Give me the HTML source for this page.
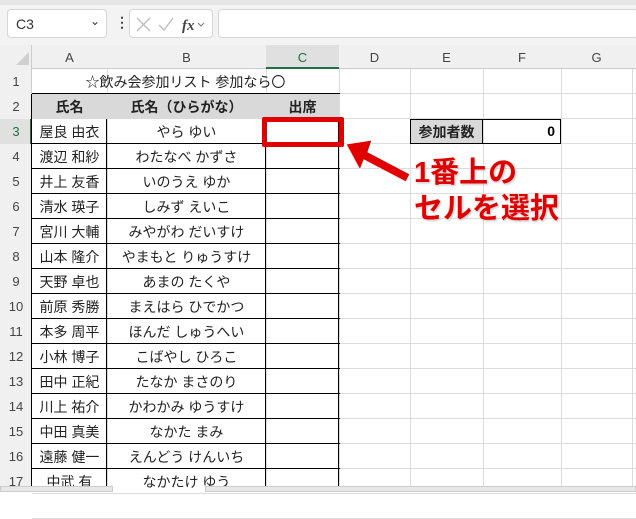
<!DOCTYPE html>
<html><head><meta charset="utf-8"><style>
body{margin:0;width:636px;height:492px;overflow:hidden;background:#fff;font-family:"Liberation Sans","Noto Sans CJK JP",sans-serif;position:relative}
.a{position:absolute;box-sizing:border-box}
.c{position:absolute;box-sizing:border-box;display:flex;align-items:center;justify-content:center;font-size:14px;color:#222}
</style></head><body>
<div class="a" style="left:0;top:0;width:636px;height:5px;background:#e6e6e6"></div>
<div class="a" style="left:0;top:5px;width:636px;height:40px;background:#f3f3f3"></div>
<div class="a" style="left:7px;top:9px;width:100px;height:29px;background:#fff;border:1px solid #d6d6d6;border-radius:4px;font-size:14px;padding:6px 0 0 8px;color:#333">C3<span style="position:absolute;right:6px;top:4px;font-size:12px">&#8964;</span></div>
<div class="a" style="left:115px;top:14px;font-size:14px;color:#444;font-weight:bold">⋮</div>
<div class="a" style="left:129px;top:9px;width:84px;height:29px;background:#fff;border:1px solid #d6d6d6;border-radius:4px">
<svg width="84" height="29" style="position:absolute;left:0;top:0"><path d="M7 8l13 13M20 8L7 21" stroke="#bbb" stroke-width="1.3" fill="none"/><path d="M29 15l5 5 9-12" stroke="#bbb" stroke-width="1.3" fill="none"/><text x="52" y="20" font-family="Liberation Serif" font-style="italic" font-weight="bold" font-size="15" fill="#444">fx</text><path d="M68 13l3 3 3-3" stroke="#777" fill="none"/></svg></div>
<div class="a" style="left:218px;top:9px;width:420px;height:29px;background:#fff;border:1px solid #d6d6d6;border-radius:4px"></div>
<!-- headers -->
<div class="a" style="left:0;top:45px;width:636px;height:24px;background:#f0f0f0;border-bottom:1px solid #ccc"></div>
<div class="a" style="left:0;top:45px;width:32px;height:447px;background:#f0f0f0;border-right:1px solid #ccc"></div>
<svg class="a" style="left:14px;top:50px" width="16" height="16"><polygon points="15,2 15,15 2,15" fill="#d0d0d0"/></svg>
<div class="a" style="left:266px;top:45px;width:73px;height:24px;background:#e0e0e0;border-bottom:2px solid #1e7145"></div>
<div class="a" style="left:0;top:119px;width:32px;height:25px;background:#e0e0e0;border-right:2px solid #1e7145"></div>
<div id="g"></div>
<!-- table content -->
<div class="c" style="left:32px;top:69px;width:307px;height:25px">☆飲み会参加リスト 参加なら〇</div>
<div class="a" style="left:32px;top:94px;width:307px;height:25px;background:#d9d9d9"></div>
<div class="c" style="left:32px;top:94px;width:75px;height:25px;font-weight:bold">氏名</div>
<div class="c" style="left:107px;top:94px;width:159px;height:25px;font-weight:bold">氏名（ひらがな）</div>
<div class="c" style="left:266px;top:94px;width:73px;height:25px;font-weight:bold">出席</div>
<div class="a" style="left:410px;top:119px;width:73px;height:25px;background:#d9d9d9;border:1px solid #000"></div>
<div class="c" style="left:410px;top:119px;width:73px;height:25px;font-weight:bold">参加者数</div>
<div class="a" style="left:482px;top:119px;width:79px;height:25px;border:1px solid #000;font-weight:bold;font-size:14px;text-align:right;padding:3px 5px 0 0">0</div>
<svg class="a" style="left:0;top:0" width="636" height="492" id="s"></svg>
<script>
var cols=[32,107,266,339,410,483,561,632],L="ABCDEFG";
var h='';
for(var i=0;i<7;i++){h+='<div class="c" style="left:'+cols[i]+'px;top:45px;width:'+(cols[i+1]-cols[i])+'px;height:24px;color:'+(i==2?'#1e7145':'#444')+';font-size:13px">'+L[i]+'</div>';
h+='<div class="a" style="left:'+cols[i+1]+'px;top:69px;width:1px;height:423px;background:#dcdcdc"></div>';}
for(var r=1;r<=18;r++){var t=69+25*(r-1);h+='<div class="c" style="left:0;top:'+t+'px;width:32px;height:25px;color:'+(r==3?'#1e7145':'#444')+';font-size:13px">'+(r<18?r:'')+'</div>';
h+='<div class="a" style="left:32px;top:'+(t+24)+'px;width:604px;height:1px;background:#dcdcdc"></div>';}
var n=[["屋良 由衣","やら ゆい"],["渡辺 和紗","わたなべ かずさ"],["井上 友香","いのうえ ゆか"],["清水 瑛子","しみず えいこ"],["宮川 大輔","みやがわ だいすけ"],["山本 隆介","やまもと りゅうすけ"],["天野 卓也","あまの たくや"],["前原 秀勝","まえはら ひでかつ"],["本多 周平","ほんだ しゅうへい"],["小林 博子","こばやし ひろこ"],["田中 正紀","たなか まさのり"],["川上 祐介","かわかみ ゆうすけ"],["中田 真美","なかた まみ"],["遠藤 健一","えんどう けんいち"],["中武 有","なかたけ ゆう"]];
for(var k=0;k<n.length;k++){var t=119+25*k;h+='<div class="c" style="left:32px;top:'+t+'px;width:75px;height:25px">'+n[k][0]+'</div><div class="c" style="left:107px;top:'+t+'px;width:159px;height:25px">'+n[k][1]+'</div>';}
// borders
for(var k=0;k<=17;k++){var t=94+25*k;if(t>492)break;h+='<div class="a" style="left:32px;top:'+(t-1)+'px;width:308px;height:1px;background:#000"></div>';}
[32,107,266,339].forEach(function(x){h+='<div class="a" style="left:'+(x-1)+'px;top:94px;width:1px;height:398px;background:#000"></div>';});
document.getElementById('g').innerHTML=h;
</script>
<div class="a" style="left:262px;top:117px;width:82px;height:30px;border:5px solid #e00000;border-radius:2px"></div>
<svg class="a" style="left:0;top:0" width="636" height="492"><polygon points="346,144 372,140 368,152 410,174 406,182 364,160 360,170" fill="#e00000" stroke="#fff" stroke-width="1"/></svg>
<div class="a" style="left:414px;top:155px;font-size:29px;font-weight:bold;color:#e00000;line-height:36px;text-shadow:0 0 2px #fff,1px 1px 2px #aaa;font-family:'Liberation Sans','Noto Sans CJK JP',sans-serif">1番上の<br>セルを選択</div>
<div class="a" style="left:0;top:486px;width:113px;height:6px;background:#e8e8e8;border:1px solid #ccc"></div>
<div class="a" style="left:205px;top:486px;width:431px;height:6px;background:#e8e8e8;border:1px solid #ccc"></div>
</body></html>
